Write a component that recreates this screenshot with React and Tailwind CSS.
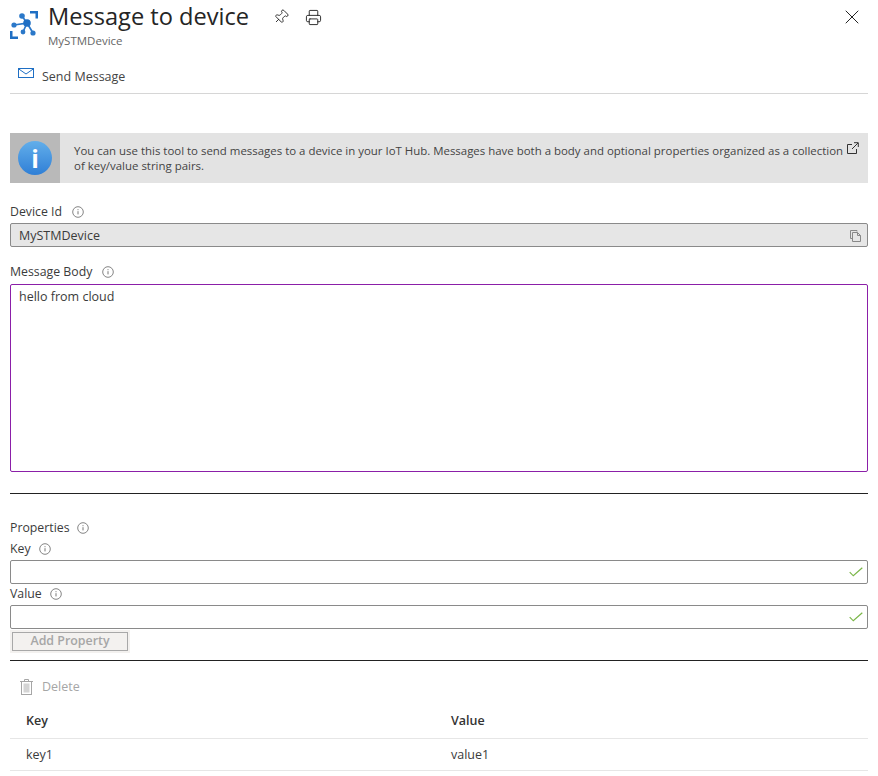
import { X, Pin, Printer } from "lucide-react";

const InfoDot = () => (
  <svg width="12" height="12" viewBox="0 0 12 12" fill="none" className="shrink-0">
    <circle cx="6" cy="6" r="5.3" stroke="#777" strokeWidth="0.9" />
    <path d="M6 5.2v3.2M6 3.2v1" stroke="#777" strokeWidth="1" />
  </svg>
);

const FieldLabel = ({ text, className }) => (
  <div className={`flex items-center text-[12.3px] leading-4 text-[#3b3b3b] ${className}`}>
    <span>{text}</span>
    <InfoDot />
  </div>
);

const CheckInput = () => (
  <div className="flex h-6 items-center justify-end rounded-[2px] border border-[#8a8a8a] pr-[4px]">
    <svg width="14" height="10" viewBox="0 0 14 10" fill="none">
      <path d="M.7 5.2l3.6 3.6L13.3.8" stroke="#7ab648" strokeWidth="1.2" />
    </svg>
  </div>
);

const HubLogo = () => (
  <svg width="28" height="28" viewBox="0 0 28 28" fill="none">
    <path d="M20 0h8v7.5h-2.5V2.5H20z" fill="#1f6fc4" />
    <path d="M0 20h2.5v5.5H8V28H0z" fill="#1f6fc4" />
    <path d="M12 5l5 7L4 14M17 12l-4 9M17 12l6 10" stroke="#2b78c9" strokeWidth="1.7" />
    <circle cx="12" cy="5" r="2.8" fill="#2b78c9" />
    <circle cx="17" cy="12" r="3.8" fill="#1f6fc4" />
    <circle cx="4" cy="14" r="2.6" fill="#2b78c9" />
    <circle cx="13" cy="21" r="2.4" fill="#2b78c9" />
    <circle cx="23" cy="22" r="2.6" fill="#2b78c9" />
  </svg>
);

const App = () => {
  return (
    <div className="h-[776px] w-[878px] overflow-hidden bg-white px-[10px] font-['Open_Sans',sans-serif] text-[#3b3b3b]">
      {/* header */}
      <div className="flex h-[60px] items-start">
        <div className="mt-[11px] shrink-0">
          <HubLogo />
        </div>
        <div className="ml-[10px]">
          <div className="mt-[1px] text-[23.6px] leading-[30px] text-[#252525]">Message to device</div>
          <div className="mt-[2px] text-[11.5px] leading-4 text-[#666]">MySTMDevice</div>
        </div>
        <Pin size={16} strokeWidth={1.3} className="ml-[24px] mt-[9px] rotate-45 text-[#222]" />
        <Printer size={17} strokeWidth={1.3} className="ml-[16px] mt-[9px] text-[#222]" />
        <X size={24} strokeWidth={1} className="ml-auto mr-[4px] mt-[5px] text-[#222]" />
      </div>

      {/* toolbar */}
      <div className="flex h-[34px] items-center border-b border-[#d6d6d6] pl-[8px]">
        <svg width="16" height="10" viewBox="0 0 16 10" fill="none" className="-mt-[7px]">
          <rect x=".5" y=".5" width="15" height="9" stroke="#1f6fc4" />
          <path d="M.5.8L8 6l7.5-5.2" stroke="#1f6fc4" />
        </svg>
        <span className="ml-[8px] mt-[1px] text-[12.5px] text-[#444]">Send Message</span>
      </div>

      {/* info banner */}
      <div className="mt-[39px] flex h-[50px] bg-[#e3e3e3]">
        <div className="flex w-[50px] shrink-0 items-center justify-center bg-[#b9b9b9]">
          <div className="flex h-[34px] w-[34px] items-center justify-center rounded-full bg-gradient-to-b from-[#62aeea] to-[#2f7fd6] text-[25px] font-bold leading-none text-white">
            i
          </div>
        </div>
        <div className="relative flex-1 whitespace-nowrap pl-[14px] pt-[10px] text-[11.45px] leading-[15px] text-[#444]">
          You can use this tool to send messages to a device in your IoT Hub. Messages have both a body and optional properties organized as a collection
          <br />
          of key/value string pairs.
          <svg width="12" height="12" viewBox="0 0 12 12" fill="none" className="absolute right-[9px] top-[9px]">
            <path d="M5 2.5H.5v9h9V7" stroke="#333" />
            <path d="M5 7l6-6M7 .7h4.3V5" stroke="#333" />
          </svg>
        </div>
      </div>

      {/* device id */}
      <FieldLabel text="Device Id" className="mt-[21px] gap-[10px]" />
      <div className="mt-[3px] flex h-6 items-center justify-between rounded-[2px] border border-[#8a8a8a] bg-[#e6e6e6] pl-2 pr-[6px] text-[12.5px]">
        <span className="mt-[2px]">MySTMDevice</span>
        <svg width="11" height="12" viewBox="0 0 11 12" fill="none" className="mt-[1px]">
          <path d="M7 1.5V.5H.5v8h2" stroke="#888" />
          <path d="M2.5 2.5h5l3 3v6h-8zM7.5 2.5v3h3" stroke="#888" />
        </svg>
      </div>

      {/* message body */}
      <FieldLabel text="Message Body" className="mt-[17px] gap-[10px]" />
      <div className="mt-[4px] h-[188px] rounded-[2px] border border-[#8b1fa8] px-2 py-[4px] text-[12.5px] leading-4">
        hello from cloud
      </div>
      <div className="mt-[21px] h-px bg-[#222]" />

      {/* properties */}
      <FieldLabel text="Properties" className="mt-[26px] gap-[7px]" />
      <FieldLabel text="Key" className="mt-[5px] gap-[8px]" />
      <div className="mt-[3px]">
        <CheckInput />
      </div>
      <FieldLabel text="Value" className="mt-[2px] gap-[8px]" />
      <div className="mt-[3px]">
        <CheckInput />
      </div>
      <button className="mt-[1px] block h-[23px] w-[120px] border-2 border-[#f3f1ef] bg-[#f3f1ef] text-[12.4px] font-semibold leading-none text-[#a6a6a6] shadow-[inset_0_0_0_1px_#a8a8a8]">
        Add Property
      </button>
      <div className="mt-[7px] h-px bg-[#222]" />

      {/* delete */}
      <div className="mt-[16px] flex items-center pl-[10px] text-[12.5px] leading-5 text-[#a6a6a6]">
        <svg width="13" height="16" viewBox="0 0 13 16" fill="none">
          <path d="M0 2.5h13M4.5 2.5V.5h4v2" stroke="#a6a6a6" />
          <rect x="1.5" y="2.5" width="10" height="13" stroke="#a6a6a6" />
          <rect x="3.5" y="4.5" width="6" height="9" fill="#d4d4d4" />
        </svg>
        <span className="ml-[9px]">Delete</span>
      </div>

      {/* table */}
      <div className="mt-[12px] flex h-[30px] items-center border-b border-[#e6e6e6] pb-[5px] pl-[16px] text-[12.5px] font-semibold text-[#333]">
        <span className="w-[425px]">Key</span>
        <span>Value</span>
      </div>
      <div className="flex h-[32px] items-center border-b border-[#e6e6e6] pl-[16px] pt-[1px] text-[12.5px] text-[#3b3b3b]">
        <span className="w-[425px]">key1</span>
        <span>value1</span>
      </div>
    </div>
  );
};

export default App;
